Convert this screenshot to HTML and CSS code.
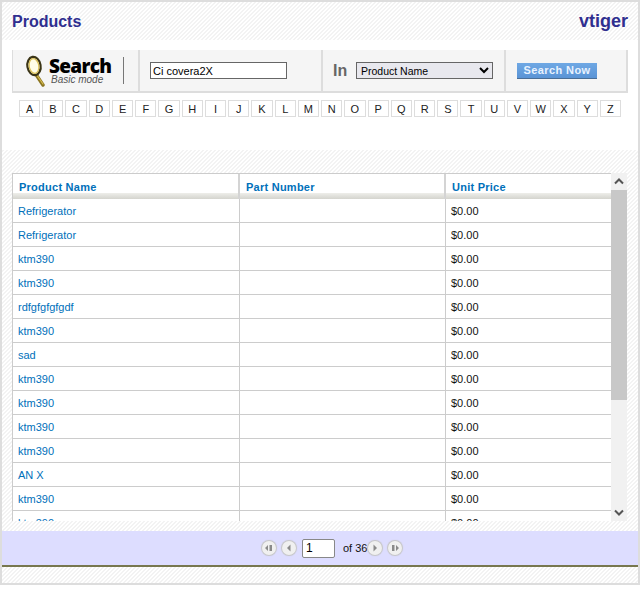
FILE: index.html
```html
<!DOCTYPE html>
<html lang="en">
<head>
    <meta charset="UTF-8">
    <title>Products</title>
    <link rel="stylesheet" href="styles.css">
</head>
<body>
    <div class="frame">
        <header class="top hatch">
            <h1>Products</h1>
            <span class="brand">vtiger</span>
        </header>
        <section class="search-area">
            <div class="search-bar">
                <div class="cell cell-logo">
                    <svg class="lens" width="22" height="32" viewBox="0 0 22 32">
                        <path d="M12 21 L18 30" stroke="#8a7420" stroke-width="3.4" stroke-linecap="round"/>
                        <path d="M12.5 21 L18 29" stroke="#d8bc50" stroke-width="1.2" stroke-linecap="round"/>
                        <ellipse cx="9" cy="11" rx="6.6" ry="9.2" fill="#fffde8" stroke="#3a3416" stroke-width="2.2" transform="rotate(-10 9 11)"/>
                        <ellipse cx="9" cy="11" rx="4.8" ry="7.4" fill="none" stroke="#d9bf55" stroke-width="1.2" transform="rotate(-10 9 11)"/>
                    </svg>
                    <div class="logo-text">
                        <span class="logo-big">Search</span>
                        <span class="logo-small">Basic mode</span>
                    </div>
                    <span class="logo-rule"></span>
                </div>
                <div class="cell cell-input">
                    <input type="text" class="search-input" value="Ci covera2X">
                </div>
                <div class="cell cell-in">
                    <span class="in-label">In</span>
                    <select class="search-select">
                        <option>Product Name</option>
                    </select>
                </div>
                <div class="cell cell-btn">
                    <button class="search-btn">Search Now</button>
                </div>
            </div>
            <div class="letters" id="letters"></div>
        </section>
        <section class="list-area hatch">
            <div class="list-box">
                <div class="list-clip">
                    <div class="list-head">
                        <div class="col col-name">Product Name</div>
                        <div class="col col-part">Part Number</div>
                        <div class="col col-price">Unit Price</div>
                    </div>
                    <div id="rows"></div>
                </div>
                <div class="fake-scroll">
                    <div class="arrow">
                        <svg width="10" height="7" viewBox="0 0 10 7"><path d="M1 5.5 L5 1.5 L9 5.5" fill="none" stroke="#555" stroke-width="2"/></svg>
                    </div>
                    <div class="thumb"></div>
                    <div class="track"></div>
                    <div class="arrow">
                        <svg width="10" height="7" viewBox="0 0 10 7"><path d="M1 1.5 L5 5.5 L9 1.5" fill="none" stroke="#555" stroke-width="2"/></svg>
                    </div>
                </div>
            </div>
        </section>
        <footer class="pager">
            <span class="pg-btn"><svg width="8" height="8" viewBox="0 0 8 8"><path d="M0 4 L3 1 V7z M4.5 1 H7 V7 H4.5z" fill="#8a8a8a"/></svg></span>
            <span class="pg-btn"><svg width="8" height="8" viewBox="0 0 8 8"><path d="M2 4 L5.5 0.5 V7.5z" fill="#8a8a8a"/></svg></span>
            <input type="text" class="pg-input" value="1">
            <span class="pg-of">of 36</span>
            <span class="pg-btn pg-next"><svg width="8" height="8" viewBox="0 0 8 8"><path d="M6 4 L2.5 0.5 V7.5z" fill="#8a8a8a"/></svg></span>
            <span class="pg-btn"><svg width="8" height="8" viewBox="0 0 8 8"><path d="M1 1 H3.5 V7 H1z M5 1 L8 4 L5 7z" fill="#8a8a8a"/></svg></span>
        </footer>
        <div class="bottom hatch"></div>
    </div>
    <script>
        const letters = document.getElementById('letters');
        'ABCDEFGHIJKLMNOPQRSTUVWXYZ'.split('').forEach(l => {
            const a = document.createElement('a');
            a.className = 'letter';
            a.textContent = l;
            letters.appendChild(a);
        });

        const names = ['Refrigerator', 'Refrigerator', 'ktm390', 'ktm390', 'rdfgfgfgfgdf', 'ktm390', 'sad',
            'ktm390', 'ktm390', 'ktm390', 'ktm390', 'AN X', 'ktm390', 'ktm390'];
        const rows = document.getElementById('rows');
        names.forEach(name => {
            const row = document.createElement('div');
            row.className = 'row';
            row.innerHTML = `
                <div class="col col-name"><a>${name}</a></div>
                <div class="col col-part"></div>
                <div class="col col-price">$0.00</div>
            `;
            rows.appendChild(row);
        });
    </script>
</body>
</html>
```

FILE: styles.css
```css
body {
    margin: 0;
    background: white;
    font-family: "Liberation Sans", Arial, sans-serif;
    font-size: 11px;
}

.frame {
    width: 636px;
    height: 581px;
    border: 2px solid #dddddd;
    display: flex;
    flex-direction: column;
}

.hatch {
    background-color: #ffffff;
    background-image: linear-gradient(135deg, #f3f3f3 25%, #ffffff 25%, #ffffff 50%, #f3f3f3 50%, #f3f3f3 75%, #ffffff 75%);
    background-size: 4px 4px;
}

.top {
    height: 38px;
    flex: none;
    display: flex;
    justify-content: space-between;
    align-items: center;
    padding: 0 10px;
    box-sizing: border-box;
    color: #2f2f8f;
    font-size: 16px;
    font-weight: bold;
}

.top h1 {
    margin: 1px 0 0;
    font-size: 16px;
}

.brand {
    font-size: 18px;
}

.search-area {
    height: 110px;
    flex: none;
    padding-top: 10px;
    box-sizing: border-box;
}

.search-bar {
    margin-left: 10px;
    width: 616px;
    height: 43px;
    display: flex;
    background: #f5f5f5;
    border-bottom: 2px solid #dddddd;
    border-left: 1px solid #dddddd;
    border-right: 2px solid #dddddd;
    box-sizing: border-box;
}

.cell {
    display: flex;
    align-items: center;
    box-sizing: border-box;
    border-right: 2px solid #dddddd;
}

.cell-logo {
    width: 127px;
    padding-left: 12px;
}

.lens {
    flex: none;
}

.logo-text {
    display: flex;
    flex-direction: column;
    margin-left: 2px;
}

.logo-big {
    font-family: "Open Sans", sans-serif;
    font-size: 19px;
    font-weight: 800;
    line-height: 18px;
    letter-spacing: -0.7px;
    color: #000000;
}

.logo-small {
    font-size: 10px;
    font-style: italic;
    color: #555555;
    line-height: 10px;
    margin-left: 2px;
    white-space: nowrap;
}

.logo-rule {
    width: 1px;
    height: 27px;
    background: #777777;
    margin-left: 12px;
}

.cell-input {
    width: 183px;
    padding-left: 10px;
}

.search-input {
    width: 137px;
    height: 17px;
    box-sizing: border-box;
    border: 1px solid #666666;
    padding: 0 2px;
    background: white;
    font: 11px "Liberation Sans", Arial, sans-serif;
    color: #000000;
    outline: none;
}

.cell-in {
    width: 183px;
    padding-left: 10px;
}

.in-label {
    font-size: 16px;
    font-weight: bold;
    color: #666666;
    width: 23px;
}

.search-select {
    width: 137px;
    height: 17px;
    border: 1px solid #666666;
    border-radius: 0;
    background-color: #e8e8ee;
    font: 10.5px "Liberation Sans", Arial, sans-serif;
    color: #000000;
    padding: 0;
}

.cell-btn {
    flex: 1;
    border-right: none;
    padding-left: 11px;
}

.search-btn {
    width: 80px;
    height: 16px;
    border: none;
    border-bottom: 1px solid #4a6e96;
    padding: 0;
    background: linear-gradient(#6fa8e4, #5a94d6);
    color: #e8f2ff;
    font: bold 11px "Liberation Sans", Arial, sans-serif;
    letter-spacing: 0.4px;
}

.letters {
    display: flex;
    gap: 2px;
    margin: 7px 0 0 17px;
    width: 602px;
}

.letter {
    flex: 1;
    height: 17px;
    box-sizing: border-box;
    border: 1px solid #dddddd;
    background: white;
    color: #222222;
    text-align: center;
    line-height: 16px;
}

.list-area {
    height: 381px;
    flex: none;
    padding: 23px 0 10px 10px;
    box-sizing: border-box;
}

.list-box {
    display: flex;
    width: 615px;
    height: 348px;
}

.list-clip {
    width: 599px;
    overflow: hidden;
    background: white;
    border-left: 1px solid #cccccc;
    border-top: 1px solid #cccccc;
    box-sizing: border-box;
}

.list-head {
    display: flex;
    height: 25px;
    box-sizing: border-box;
    background: linear-gradient(#ffffff 0, #ffffff 19px, #eeeeea 19px, #d4d4ce 25px);
    color: #0070ba;
    font-weight: bold;
    letter-spacing: 0.25px;
}

.list-head .col {
    padding: 7px 0 0 6px;
    border-right: 2px solid #d4d4d4;
}

.row {
    display: flex;
    height: 24px;
    box-sizing: border-box;
    border-bottom: 1px solid #cccccc;
}

.col {
    box-sizing: border-box;
    border-right: 1px solid #cccccc;
    padding: 6px 0 0 5px;
    line-height: 12px;
}

.col-name {
    width: 227px;
}

.col-part {
    width: 206px;
}

.col-price {
    flex: 1;
    color: #111111;
    border-right: none;
}

.list-head .col-price {
    color: #0070ba;
    border-right: none;
}

.col a {
    color: #0070ba;
}

.fake-scroll {
    width: 16px;
    flex: none;
    display: flex;
    flex-direction: column;
    background: #f1f1f1;
}

.arrow {
    height: 17px;
    flex: none;
    display: flex;
    align-items: center;
    justify-content: center;
}

.thumb {
    height: 210px;
    flex: none;
    background: #c8c8c8;
}

.track {
    flex: 1;
}

.pager {
    height: 34px;
    flex: none;
    background: #ddddff;
    display: flex;
    align-items: center;
    box-sizing: border-box;
    padding-left: 260px;
}

.pg-btn {
    width: 14px;
    height: 14px;
    border-radius: 50%;
    margin-right: 6px;
    background: #f0f0f0;
    box-shadow: 0 0 1px 1px #c4c4c4;
    display: flex;
    align-items: center;
    justify-content: center;
    flex: none;
}

.pg-next {
    margin-left: 1px;
}

.pg-input {
    width: 33px;
    height: 19px;
    box-sizing: border-box;
    border: 1px solid #888888;
    border-radius: 2px;
    padding: 0 3px;
    background: white;
    font: 12px "Liberation Sans", Arial, sans-serif;
    color: #000000;
    outline: none;
}

.pg-of {
    margin-left: 8px;
    font-size: 11px;
    color: #111111;
}

.bottom {
    flex: 1;
    border-top: 2px solid #77774f;
}
```
